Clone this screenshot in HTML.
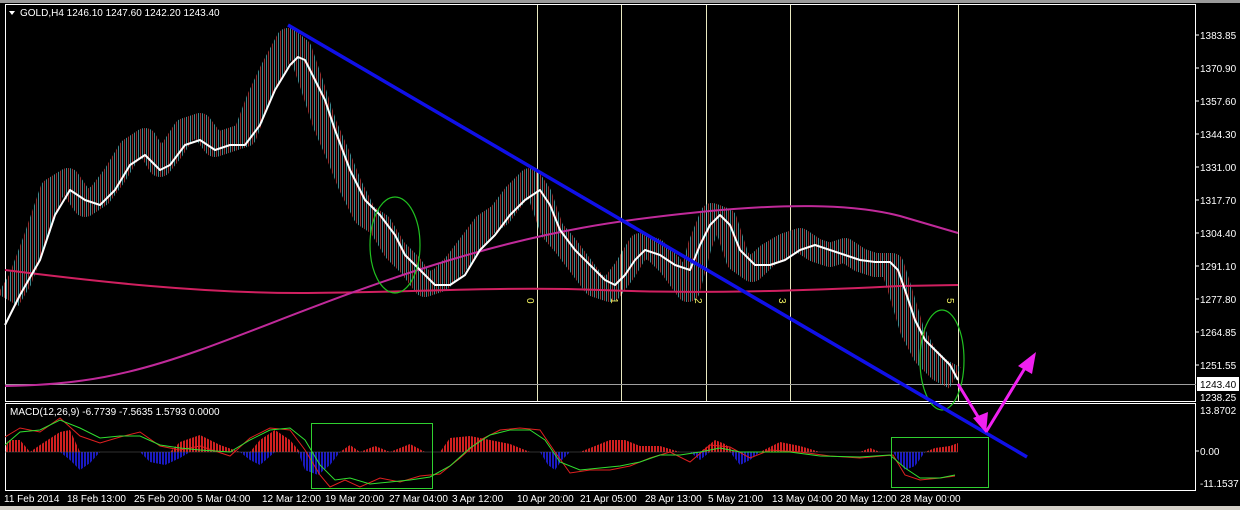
<!DOCTYPE html>
<html><head><meta charset="utf-8"><style>
html,body{margin:0;padding:0;background:#000;width:1240px;height:510px;overflow:hidden}
svg{display:block}
text{font-family:"Liberation Sans",sans-serif;font-size:10px;fill:#fff}
</style></head><body>
<svg width="1240" height="510" viewBox="0 0 1240 510" xmlns="http://www.w3.org/2000/svg">
<defs>
<pattern id="bars" x="0" y="0" width="4" height="40" patternUnits="userSpaceOnUse">
<rect x="0" y="0" width="1" height="40" fill="#c83c3c"/>
<rect x="2" y="0" width="1" height="40" fill="#50b8c0"/>
</pattern>
<pattern id="rh" width="3" height="40" patternUnits="userSpaceOnUse"><rect width="2" height="40" fill="#d02020"/></pattern>
<pattern id="bh" width="3" height="40" patternUnits="userSpaceOnUse"><rect width="2" height="40" fill="#1a1ac0"/></pattern>
</defs>
<rect width="1240" height="510" fill="#000"/>
<rect x="0" y="0" width="1240" height="3" fill="#9a9a9a"/>
<rect x="0" y="506" width="1240" height="4" fill="#d4d0c8"/>
<rect x="5.5" y="4.5" width="1190" height="397" fill="none" stroke="#fff"/>
<rect x="5.5" y="403.5" width="1190" height="87" fill="none" stroke="#fff"/>
<g stroke="#e8e8c0" stroke-width="1">
<line x1="537.5" y1="5" x2="537.5" y2="401"/><line x1="621.5" y1="5" x2="621.5" y2="401"/>
<line x1="706.5" y1="5" x2="706.5" y2="401"/><line x1="790.5" y1="5" x2="790.5" y2="401"/>
<line x1="958.5" y1="5" x2="958.5" y2="401"/>
</g>
<line x1="5" y1="384.5" x2="1196" y2="384.5" stroke="#a0a0a0"/>
<polyline fill="none" stroke="url(#bars)" stroke-opacity="0.75" stroke-width="24" stroke-linejoin="round" points="8,300 20,280 35,240 52,190 68,180 85,205 100,195 115,175 130,150 145,140 160,165 172,150 185,130 200,125 215,145 230,140 245,135 258,100 272,70 288,40 300,50 312,85 325,125 338,155 350,185 365,215 380,225 395,250 410,265 425,285 440,280 455,265 470,245 485,225 500,215 515,195 530,180 540,195 552,230 565,245 580,265 595,285 610,290 625,270 640,245 655,250 670,265 688,290 700,245 712,215 725,220 738,260 752,270 768,255 785,245 800,240 815,250 830,255 845,250 860,260 875,265 892,265 900,290 912,330 925,355 940,370 955,378"/>
<g font-size="9">
<text transform="translate(527,298) rotate(90)" style="fill:#f0f060">0</text>
<text transform="translate(611,298) rotate(90)" style="fill:#f0f060">1</text>
<text transform="translate(695,298) rotate(90)" style="fill:#f0f060">2</text>
<text transform="translate(779,298) rotate(90)" style="fill:#f0f060">3</text>
<text transform="translate(947,298) rotate(90)" style="fill:#f0f060">5</text>
</g>
<path fill="none" stroke="#d02060" stroke-width="2" d="M5,270 C100,282 200,293 300,293 S500,286 600,290 S800,291 900,286 L958,285"/>
<path fill="none" stroke="#c02a9a" stroke-width="2" d="M5,386 C80,385 130,375 200,350 S350,290 450,260 S620,220 700,212 S850,203 900,216 L958,233"/>
<polyline fill="none" stroke="#fff" stroke-width="2" stroke-linejoin="round" points="5,325 20,295 40,260 55,215 70,190 85,200 100,205 115,190 130,165 145,155 160,170 170,165 185,145 200,140 215,150 230,145 245,145 260,125 275,90 290,65 298,57 305,60 315,80 325,100 335,130 350,170 365,200 380,215 395,235 405,255 420,270 435,285 450,285 465,275 480,250 495,235 510,215 525,200 540,190 550,205 560,230 575,250 590,265 605,280 615,285 625,275 635,260 645,250 660,255 675,265 690,270 700,245 710,225 720,215 730,225 740,250 755,265 770,265 785,260 800,250 815,245 830,250 845,255 860,260 875,262 890,262 898,270 905,290 915,320 925,340 940,355 950,365 958,380"/>
<ellipse cx="395" cy="245" rx="25" ry="48" fill="none" stroke="#20c020" stroke-width="1.2"/>
<ellipse cx="942" cy="360" rx="22" ry="50" fill="none" stroke="#20c020" stroke-width="1.2"/>
<polygon fill="url(#rh)" points="5,452 8,440 20,440 30,452 40,445 60,432 70,430 80,452"/>
<polygon fill="url(#bh)" points="60,452 70,460 80,470 90,463 100,452"/>
<polygon fill="url(#bh)" points="140,452 150,462 165,465 180,458 190,452"/>
<polygon fill="url(#rh)" points="170,452 180,442 200,435 220,445 240,452"/>
<polygon fill="url(#bh)" points="240,452 250,460 260,465 275,452"/>
<polygon fill="url(#rh)" points="250,452 260,440 275,430 290,440 300,452"/>
<polygon fill="url(#bh)" points="298,452 305,470 318,475 330,465 340,452"/>
<polygon fill="url(#rh)" points="340,452 350,445 360,452 375,446 390,452 410,444 425,452"/>
<polygon fill="url(#rh)" points="440,452 450,438 470,436 490,440 510,444 530,452"/>
<polygon fill="url(#bh)" points="540,452 548,465 555,470 562,460 570,452"/>
<polygon fill="url(#rh)" points="580,452 595,446 610,440 625,440 640,446 660,446 680,452"/>
<polygon fill="url(#bh)" points="690,452 700,460 710,452"/>
<polygon fill="url(#rh)" points="700,452 715,440 725,444 735,452"/>
<polygon fill="url(#bh)" points="730,452 740,465 750,460 760,452"/>
<polygon fill="url(#rh)" points="760,452 780,442 800,446 820,452 860,452 870,448 880,452"/>
<polygon fill="url(#bh)" points="893,452 905,470 915,466 925,452"/>
<polygon fill="url(#rh)" points="925,452 935,448 950,446 958,443 958,452"/>
<line x1="5" y1="452" x2="958" y2="452" stroke="#606060" stroke-width="0.5"/>
<polyline fill="none" stroke="#e02020" stroke-width="1" points="5,437 20,428 40,432 60,418 80,436 100,443 120,437 140,432 160,446 180,450 200,446 230,456 250,438 270,428 290,430 305,450 320,475 330,487 345,480 360,487 380,478 400,482 420,476 440,474 460,458 480,440 500,430 520,428 540,430 555,452 570,473 590,470 610,470 630,466 650,458 670,452 690,462 710,445 730,447 750,458 770,450 800,452 830,456 860,458 893,455 905,475 920,480 940,478 955,476"/>
<polyline fill="none" stroke="#30e030" stroke-width="1" points="5,445 20,432 40,430 60,420 80,428 100,438 120,436 140,436 160,445 180,448 200,450 230,452 250,440 270,430 290,428 305,440 320,465 335,480 350,478 370,484 390,482 410,480 430,477 450,466 470,448 490,435 510,430 530,430 545,440 560,462 580,470 600,468 620,466 640,462 660,455 680,455 700,452 720,448 740,452 760,452 790,452 820,456 860,457 890,455 905,468 920,478 940,478 955,475"/>
<rect x="311.5" y="423.5" width="121" height="65" fill="none" stroke="#30d030" stroke-width="1"/>
<rect x="891.5" y="437.5" width="97" height="50" fill="none" stroke="#30d030" stroke-width="1"/>
<line x1="288" y1="25" x2="1027" y2="457" stroke="#1010e8" stroke-width="3.5"/>
<g stroke="#f020f0" stroke-width="3" fill="#f020f0">
<line x1="958" y1="384" x2="980" y2="420"/>
<polygon points="986,433 973,418 988,412" stroke="none"/>
<line x1="986" y1="432" x2="1025" y2="368"/>
<polygon points="1036,352 1032,374 1018,366" stroke="none"/>
</g>
<polygon points="9,11 15,11 12,15" fill="#fff"/>
<text x="20" y="16">GOLD,H4  1246.10 1247.60 1242.20 1243.40</text>
<text x="10" y="415">MACD(12,26,9) -6.7739 -7.5635 1.5793 0.0000</text>
<g>
<text x="1200" y="39">1383.85</text><text x="1200" y="72">1370.90</text><text x="1200" y="105">1357.60</text>
<text x="1200" y="138">1344.30</text><text x="1200" y="171">1331.00</text><text x="1200" y="204">1317.70</text>
<text x="1200" y="237">1304.40</text><text x="1200" y="270">1291.10</text><text x="1200" y="303">1277.80</text>
<text x="1200" y="336">1264.85</text><text x="1200" y="369">1251.55</text><text x="1200" y="401">1238.25</text>
<text x="1200" y="414">13.8702</text><text x="1200" y="455">0.00</text><text x="1200" y="487">-11.1537</text>
</g>
<g stroke="#fff"><line x1="1196" y1="35" x2="1199" y2="35"/><line x1="1196" y1="68" x2="1199" y2="68"/><line x1="1196" y1="101" x2="1199" y2="101"/><line x1="1196" y1="134" x2="1199" y2="134"/><line x1="1196" y1="167" x2="1199" y2="167"/><line x1="1196" y1="200" x2="1199" y2="200"/><line x1="1196" y1="233" x2="1199" y2="233"/><line x1="1196" y1="266" x2="1199" y2="266"/><line x1="1196" y1="299" x2="1199" y2="299"/><line x1="1196" y1="332" x2="1199" y2="332"/><line x1="1196" y1="365" x2="1199" y2="365"/><line x1="1196" y1="451" x2="1199" y2="451"/></g>
<rect x="1197" y="377" width="42" height="14" fill="#fff"/>
<text x="1200" y="388" style="fill:#000">1243.40</text>
<g>
<text x="4" y="502">11 Feb 2014</text><text x="67" y="502">18 Feb 13:00</text><text x="134" y="502">25 Feb 20:00</text>
<text x="197" y="502">5 Mar 04:00</text><text x="262" y="502">12 Mar 12:00</text><text x="325" y="502">19 Mar 20:00</text>
<text x="389" y="502">27 Mar 04:00</text><text x="452" y="502">3 Apr 12:00</text><text x="517" y="502">10 Apr 20:00</text>
<text x="580" y="502">21 Apr 05:00</text><text x="645" y="502">28 Apr 13:00</text><text x="708" y="502">5 May 21:00</text>
<text x="772" y="502">13 May 04:00</text><text x="836" y="502">20 May 12:00</text><text x="900" y="502">28 May 00:00</text>
</g>
</svg>
</body></html>
